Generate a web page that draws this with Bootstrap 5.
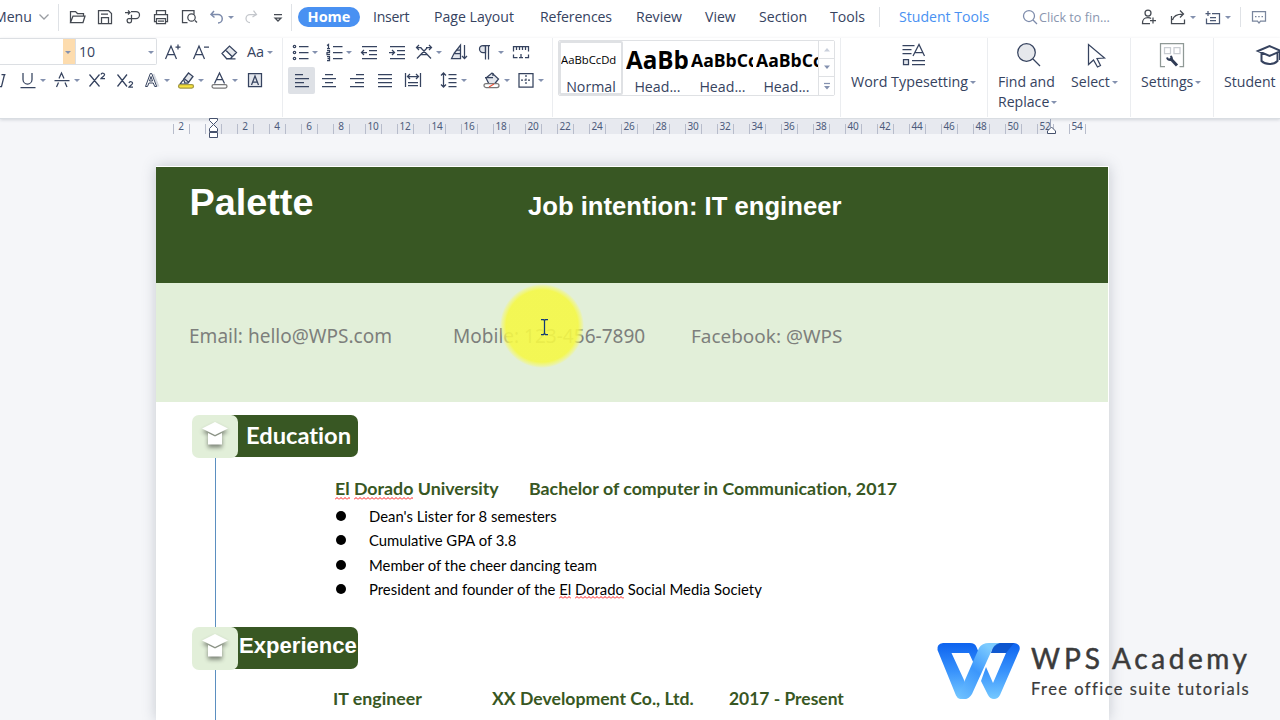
<!DOCTYPE html>
<html lang="en">
<head>
<meta charset="utf-8">
<meta name="viewport" content="width=device-width, initial-scale=1">
<title>Writer</title>
<link href="https://cdn.jsdelivr.net/npm/bootstrap@5.3.0/dist/css/bootstrap.min.css" rel="stylesheet">
<style>
  :root { --ink:#36435f; --dark:#385723; --pale:#e2efd9; --rule:#e6e8eb; }
  body { width:1280px; height:720px; background:#f5f6f9; color:var(--ink); font:14.1px/20px "Open Sans",sans-serif; }
  svg { display:block; overflow:visible; fill:none; stroke:var(--ink); stroke-width:1.25; flex:none; }
  .tabs-row, .tool-row { display:grid; align-items:center; white-space:nowrap; }
  .tabs-row { height:38px; padding-bottom:4px; grid-template-columns:34px 24px 10px 27px 28px 28px 28px 28px 19px 15px 27px 23px 7px 75px 61px 106px 96px 69px 54px 71px 49px 20px 121px 19px 100px 29px 20px 15px 20px 17px 9px 31px; }
  .tabs-row > svg { stroke:#454a52; }
  .tabs-row > svg.soft { stroke:#7d8bab; }
  .caret { display:block; width:10px; height:10px; flex:none; }
  .caret::before { content:""; display:block; margin:4px 0 0 2px; width:6px; border:3px solid transparent; border-top-color:#8491af; border-bottom:0; }
  .vline { width:1px; height:20px; background:#dfe2e6; }
  .home-tab { width:62px; height:20px; line-height:20px; font-weight:700; font-size:14.5px; background:#4991f2; }
  .ribbon { height:81px; border-bottom:1px solid #d9dde2; box-shadow:0 1px 3px rgba(90,100,120,.22); position:relative; }
  .group { height:79px; border-right:1px solid #ebedf0; flex:none; }
  .tool-row { height:29px; }
  .f1 { grid-template-columns:163px 28px 28px 28px 18px 15px; height:27px; }
  .f2 { grid-template-columns:18px 20px 14px 20px 15px 28px 27px 20px 15px 19px 14px 20px 15px 20px; }
  .p1 { grid-template-columns:19px 15px 19px 15px 28px 27px 20px 15px 27px 20px 15px 20px; height:27px; padding-left:8px; }
  .p2 { grid-template-columns:31px 28px 28px 28px 36px 20px 23px 20px 14px 20px 15px; padding-left:5px; }
  .f2, .p2 { margin-top:1px; height:28px; }
  .size-box { width:157px; height:27px; border:1px solid #dcdfe3; border-left:0; border-radius:0 2px 2px 0; }
  .hot { width:13px; margin-left:63px; background:#fddcae; border-right:1px solid #dcdfe3; }
  .active-tool { width:27px; height:27px; background:#dee1e6; border-radius:2px; display:flex; align-items:center; justify-content:center; }
  .gallery { width:277px; height:56px; margin:2px 0 0 5px; border:1px solid #dfe1e4; border-radius:2px; color:#000; }
  .swatch { width:65px; height:54px; overflow:hidden; white-space:nowrap; flex:none; }
  .swatch.on { border:2px solid #dfe1e4; width:64px; border-radius:2px; margin-right:2px; }
  .sample { height:38px; width:62px; margin-left:1px; overflow:hidden; line-height:38px; font-family:"Open Sans",sans-serif; font-weight:700; }
  .on .sample { font-weight:400; height:36px; line-height:34px; font-size:11.3px; color:#000; margin-left:0; }
  .swatch small { display:block; text-align:center; font-size:14.2px; line-height:15px; color:var(--ink); }
  .scroller { width:16px; border-left:1px solid #dfe1e4; }
  .scroller div { height:18px; border-bottom:1px solid #dfe1e4; display:flex; align-items:center; justify-content:center; }
  .scroller div:last-child { border:0; }
  .big-tool { padding-top:5px; white-space:nowrap; flex:none; }
  .big-tool svg { height:24px; width:24px; margin-bottom:5px; }
  .ruler { height:47px; padding-left:173px; }
  .ruler-cell { width:32px; height:15px; flex:none; font:10px/14px "Noto Sans",sans-serif; color:#4c5b7c; position:relative; background:linear-gradient(#b7bccb,#b7bccb) 0 5px/1px 10px no-repeat, linear-gradient(#b7bccb,#b7bccb) 16px 5px/1px 10px no-repeat; }
  .ruler-cell span { display:block; width:16px; text-align:center; letter-spacing:-.2px; }
  .ruler-band { left:213px; width:838px; top:0; height:15px; background:#e7e9ef; }
  .sheet { width:953px; margin-left:156px; padding:1px 1px 0 0; background:#fff; box-shadow:0 0 13px rgba(70,80,100,.27); flex:1 1 0; min-height:0; overflow:hidden; }
  .banner { height:116px; background:var(--dark); color:#fff; font-family:"Liberation Sans",sans-serif; font-weight:700; padding-left:33.500px; }
  .banner span:first-child { width:338.500px; font-size:37.8px; line-height:70px; }
  .banner span:last-child { font-size:25.65px; line-height:78px; }
  .contact { height:119px; background:var(--pale); color:#7d7f7c; font:19.05px/106px "Noto Sans",sans-serif; padding-left:33px; }
  .resume { font-family:Lato,sans-serif; font-variant-ligatures:none; color:#000; padding-left:36px; position:relative; }
  .timeline { left:59px; top:40px; width:1px; height:300px; background:#5b8fc0; }
  .heading { width:166px; height:43px; position:relative; }
  .heading-icon { width:46px; height:43px; background:var(--pale); border-radius:7px; z-index:1; }
  .heading-icon svg { filter:drop-shadow(0 3px 2px rgba(0,0,0,.45)); stroke:none; }
  .heading-bar { width:133px; height:42px; margin-left:-13px; padding-left:21px; background:var(--dark); border-radius:7px; color:#fff; font-weight:700; font-size:23.7px; line-height:40px; white-space:nowrap; }
  .heading-bar.alt { font:700 22.1px/37px "Liberation Sans",sans-serif; padding-left:14px; }
  .role { color:var(--dark); font-weight:700; font-size:17.8px; line-height:24px; white-space:nowrap; }
  .facts { font-size:14.85px; line-height:24.3px; margin:0; padding:0 0 0 142px; list-style:none; white-space:nowrap; }
  .facts li { display:flex; align-items:center; }
  .facts li::before { content:""; width:10px; height:10px; border-radius:50%; background:#000; margin:0 23px 0 2px; }
  .typo { padding-bottom:1px; background:url("data:image/svg+xml,%3Csvg xmlns='http://www.w3.org/2000/svg' width='4' height='3'%3E%3Cpath d='M0 2.5L2 .5L4 2.5' fill='none' stroke='red' stroke-width='.9'/%3E%3C/svg%3E") 0 100%/4px 3px repeat-x; }
  .spot { left:500px; top:284px; width:84px; height:84px; background:radial-gradient(circle closest-side,rgba(245,248,70,.9) 0 36px,rgba(245,248,90,.72) 38px,rgba(245,248,110,.5) 40px,transparent 42px); }
  .brand-mark { left:936px; top:641px; color:#3b3b3b; }
  .brand-mark b { display:block; font:400 28px/32px Lato,sans-serif; -webkit-text-stroke:.5px #3b3b3b; white-space:nowrap; }
  .brand-mark em { display:block; font:400 16.5px/20px Lato,sans-serif; letter-spacing:1.45px; font-variant-ligatures:none; white-space:nowrap; -webkit-text-stroke:.2px #3b3b3b; }
</style>
</head>
<body class="overflow-hidden position-relative d-flex flex-column m-0">
<header class="bg-white flex-shrink-0">
  <nav class="tabs-row">
    <span style="margin-left:-6px">Menu</span>
    <svg width="20" height="20"><path stroke="#9a9da2" d="M5.500 7.500l4.500 4.500 4.500-4.500"/></svg>
    <i class="vline" style="height:27px"></i>
    <svg width="20" height="20"><path d="M2.500 15.500v-11h5l2 2h6v2.500M2.500 15.500l2.500-6.500h12l-2 6.500z"/></svg>
    <svg width="20" height="20"><path d="M3.500 3.500h10l3 3v10h-13zM6.500 16.500v-6h7v6M6 7h7"/></svg>
    <svg width="20" height="20"><path d="M2 5.500h5M5 3.500l2 2-2 2M8 4.500h5a3.500 3.500 0 0 1 0 7h-7a2.200 2.200 0 1 0 2.500 2.200v-6"/></svg>
    <svg width="20" height="20"><path d="M5.500 7.500v-4h9v4M5.500 14.500h-2v-7h13v7h-2M5.500 11.500h9v5h-9zM7 14h6"/></svg>
    <svg width="20" height="20"><path d="M8.500 15.500h-5v-12h11.500v4M16 13.500l2 2"/><circle cx="12.500" cy="10.500" r="3.700"/></svg>
    <svg class="soft" width="20" height="20"><path stroke-width="1.500" d="M7 4l-3 3.500 3.500 3M4.500 7.500H11a4 4 0 0 1 0 8.500"/></svg>
    <i class="caret"></i>
    <svg width="20" height="20"><path stroke="#c4c7cc" d="M12.500 3.500l3 4-4 2.500M15 7.500H9a4 4 0 0 0 0 8"/></svg>
    <svg width="20" height="20"><path d="M6 7.500h8M7 11l3 3 3-3z"/></svg>
    <i class="vline" style="height:27px"></i>
    <span class="home-tab rounded-pill text-white text-center">Home</span>
    <span style="letter-spacing:-.3px">Insert</span><span>Page Layout</span><span style="letter-spacing:-.1px">References</span><span>Review</span><span>View</span><span>Section</span><span>Tools</span>
    <i class="vline"></i>
    <span style="color:#4991f2">Student Tools</span>
    <svg class="soft" width="20" height="20"><circle cx="9" cy="9" r="5.500"/><path d="M13 13l4 4"/></svg>
    <span style="font-size:12.65px;color:#8a96af">Click to fin...</span>
    <svg width="20" height="20"><circle cx="9" cy="6" r="3"/><path d="M11 16.500H3.500c0-4 1-6 5.500-6q2 0 3 1M11 13.500h6M14 10.500v6"/></svg>
    <svg width="20" height="20"><path d="M3.500 9v7.500h13v-4M4.500 13c1-4 4-6 10-6M12 3.500l3.500 3.500-3.500 3.500"/></svg>
    <i class="caret"></i>
    <svg width="20" height="20"><path stroke="#4d5a75" d="M2.500 6.500h5M5 4v5M9 6.500h7.500v10h-3M3.500 11.500v5h11M7 10.500h6M7 13.500h6"/></svg>
    <i class="caret"></i>
    <i class="vline"></i>
    <svg width="20" height="20"><path stroke="#7a869d" d="M3.500 4.500h13v9.500h-5l-1.500 2-1.500-2h-5zM6 9.500h1.500M9.200 9.500h1.500M12.500 9.500h1.500"/></svg>
  </nav>

  <div class="ribbon d-flex bg-white">
    <section class="group" style="width:283px">
      <div class="tool-row f1">
        <div class="size-box d-flex"><span class="hot d-flex align-items-center"><i class="caret"></i></span><span class="flex-grow-1" style="line-height:26px;padding-left:3px">10</span><i class="caret mt-2 me-0"></i></div>
        <svg width="20" height="20"><path d="M2.500 17L8 4l5.500 13M4.500 12.500h7M12.500 5h5M15 2.500v5"/></svg>
        <svg width="20" height="20"><path d="M2.500 17L8 4l5.500 13M4.500 12.500h7M13 5h5"/></svg>
        <svg width="20" height="20"><path fill="#e6e8ec" stroke="none" d="M6.500 8.500L11 4l6.500 6.500-4.500 5z"/><path d="M3 11.500l7.500-7.500 7 6.500-6 6H7.500zM6.500 8l6.500 6.500M7 16.800h9.500"/></svg>
        <span style="font-size:14.500px;letter-spacing:-.2px">Aa</span><i class="caret"></i>
      </div>
      <div class="tool-row f2">
        <svg width="18" height="20"><path d="M0 16.500h1.500L4.500 4.500M1.500 4.500h4"/></svg>
        <svg width="20" height="20"><path d="M5 3v6.500a4.500 4.500 0 0 0 9 0V3M2.500 17.500h15"/></svg><i class="caret"></i>
        <svg width="20" height="20"><path d="M4.500 17l2-4.500M7 8.500L9.500 3l2.500 5.500M13 12.500l2 4.500M2.500 10.500h15"/></svg><i class="caret"></i>
        <svg width="20" height="20"><path d="M2.500 4.500l10 12M12.500 4.500l-10 12M14 4.500c.5-2 4-1.500 3.500.5-.2 1-3 2.500-3.500 3.500h4"/></svg>
        <svg width="20" height="20"><path d="M2.500 4.500l9.500 12M12 4.500l-9.500 12M14 13c.5-2 4-1.500 3.500.5-.2 1-3 2.500-3.500 3.500h4"/></svg>
        <svg width="20" height="20"><path stroke="#d3d7df" stroke-width="2" d="M11.500 4l5 12.500"/><path stroke-width="1" d="M3.500 16.500L8.300 3.500h1.400l5 13h-2L11.300 13H6.900l-1.400 3.500zM7.500 11L9 6.500l1.500 4.500z"/></svg><i class="caret"></i>
        <svg width="20" height="20"><path fill="#e6e8ec" d="M6.500 9.500L11.500 3l4.500 3.500-5 6.500H8z"/><path d="M7 8.500l5 4M6 10l-3 4h5"/><rect x="1.500" y="14.500" width="15" height="3.500" rx="1.700" fill="#f8e33a" stroke="#a49a45"/></svg><i class="caret"></i>
        <svg width="20" height="20"><path d="M4.500 13.500L9.500 3l5 10.500M6.500 9.500h6.500"/><rect x="2" y="14.500" width="15" height="3.500" rx="1.700" fill="#fff" stroke="#777"/></svg><i class="caret"></i>
        <svg width="20" height="20"><path fill="#e3e6ec" d="M3.500 3.500h13v13h-13z"/><path d="M6.500 15L10 6l3.500 9M7.500 12h5"/></svg>
      </div>
    </section>

    <section class="group" style="width:270px">
      <div class="tool-row p1">
        <svg width="20" height="20"><circle cx="3.500" cy="4.500" r="1.200"/><circle cx="3.500" cy="10.500" r="1.200"/><circle cx="3.500" cy="16.500" r="1.200"/><path d="M8 4.500h9.500M8 10.500h9.500M8 16.500h9.500"/></svg><i class="caret"></i>
        <svg width="20" height="20"><path d="M8 4.500h9.500M8 10.500h9.500M8 16.500h9.500M2 3.500l1.500-1v4M2 6.500h3M2 8.500h2.500v2H2v2h3M2 14.500h2.500v4H2M2.500 16.500h2"/></svg><i class="caret"></i>
        <svg width="20" height="20"><path d="M3 4.500h15M10 8.500h8M10 12.500h8M3 16.500h15M2.500 10.500H8M5 8l-2.500 2.500L5 13"/></svg>
        <svg width="20" height="20"><path d="M3 4.500h15M10 8.500h8M10 12.500h8M3 16.500h15M2 10.500H7.500M5 8l2.500 2.500L5 13"/></svg>
        <svg width="20" height="20"><path d="M3 16.500L13 6M17 16.500L7 6M6.500 12.500h7M2.500 5.500h5M12 5.500h5.500M5 3L2.500 5.500 5 8M15 3l2.500 2.500L15 8"/></svg><i class="caret"></i>
        <svg width="20" height="20"><path fill="#e3e6ec" d="M5 11.500L11.500 3v13.500h-9L5 11.500h6"/><path d="M11.500 8h-4M15.500 3v13.500M13 14l2.500 2.500L18 14"/></svg>
        <svg width="20" height="20"><path fill="#e3e6ec" d="M9.500 3.500H7a3.500 3.500 0 0 0 0 7h2.500z"/><path d="M7 3.500h7M9.500 3.500v14M12.500 3.500v14"/></svg><i class="caret"></i>
        <svg width="20" height="20"><path d="M2.500 9.500v-5h15v5M5.500 5v3M8.500 5v3M11.500 5v3M14.500 5v3M2.500 12.500v3h4M14 15.500h3.500v-3M10 12v3.500M8 15.500h4"/></svg>
      </div>
      <div class="tool-row p2">
        <span class="active-tool"><svg width="20" height="20"><path d="M3 4.500h8M3 8.500h14M3 12.500h9M3 16.500h14"/></svg></span>
        <svg width="20" height="20"><path d="M6 4.500h8M3 8.500h14M6 12.500h8M3 16.500h14"/></svg>
        <svg width="20" height="20"><path d="M9 4.500h8M3 8.500h14M8 12.500h9M3 16.500h14"/></svg>
        <svg width="20" height="20"><path d="M3 4.500h14M3 8.500h14M3 12.500h14M3 16.500h14"/></svg>
        <svg width="20" height="20"><path d="M2.500 3v14M17.500 3v14M5 6.500h10M7 4L4.500 6.500 7 9M13 4l2.500 2.500L13 9M5 12.500h10M5 15.500h10"/></svg>
        <svg width="20" height="20"><path d="M4.500 3v14M2 5.500L4.500 3 7 5.500M2 14.500L4.500 17 7 14.500M9.500 4.500h8M9.500 8.500h8M9.500 12.500h8M9.500 16.500h8"/></svg><i class="caret"></i>
        <svg width="20" height="20"><path fill="#e3e6ec" d="M4 8l6-5 6.500 6-4 5H7z"/><path d="M3 7.500h8M11 3v3"/><rect x="2" y="13.500" width="15" height="4" rx="2" fill="#fff" stroke="#777"/><path stroke="#e8553e" d="M7 17l5-3"/></svg><i class="caret"></i>
        <svg width="20" height="20"><path d="M3 3.500h14v13.500h-14z"/><path d="M10 5v10.500M5 10.200h10" stroke-dasharray="2 1.500"/></svg><i class="caret"></i>
      </div>
    </section>

    <section class="group" style="width:288px">
      <div class="gallery d-flex">
        <div class="swatch on"><div class="sample">AaBbCcDd</div><small>Normal</small></div>
        <div class="swatch"><div class="sample" style="font-size:24.200px">AaBb</div><small>Head...</small></div>
        <div class="swatch"><div class="sample" style="font-size:17.600px">AaBbCc</div><small>Head...</small></div>
        <div class="swatch" style="width:63px"><div class="sample" style="font-size:17.600px">AaBbCc</div><small>Head...</small></div>
        <div class="scroller ms-auto bg-white">
          <div><svg width="8" height="5"><path fill="#c9cfdb" stroke="none" d="M1 4.500L4 1l3 3.500z"/></svg></div>
          <div><svg width="8" height="5"><path fill="#8491af" stroke="none" d="M1 .500h6L4 4z"/></svg></div>
          <div><svg width="8" height="7"><path fill="#8491af" stroke="none" d="M1 3h6L4 6.500z"/><path stroke="#8491af" d="M1 .500h6"/></svg></div>
        </div>
      </div>
    </section>

    <section class="group" style="width:147px">
      <div class="big-tool" style="padding-left:10px">
        <svg style="margin-left:51px"><path d="M.500 2.500h12M.500 6.500h9M.500 10.500h9M11 13L17 1.500 22.500 13M13 9.500h8M10 17.500h13M10 21.500h13"/><path fill="#e3e6ec" d="M1.500 16.500h5v5h-5z"/></svg>
        <div class="d-flex align-items-center" style="font-size:14.300px">Word Typesetting<i class="caret"></i></div>
      </div>
    </section>
    <section class="group d-flex" style="width:143px">
      <div class="big-tool" style="width:73px;padding-left:10px">
        <svg style="margin-left:19px"><circle cx="9.500" cy="9.500" r="8.800" fill="#e6e8ec"/><path d="M16 16l7 7"/></svg>
        <div>Find and</div><div class="d-flex align-items-center">Replace<i class="caret"></i></div>
      </div>
      <div class="big-tool" style="padding-left:10px">
        <svg style="margin-left:16px"><path fill="#fff" d="M1.500 1.500v20l5-4.500 4 7 3-1.500-3.500-7 7.500-.500z"/></svg>
        <div class="d-flex align-items-center">Select<i class="caret"></i></div>
      </div>
    </section>
    <section class="group" style="width:83px">
      <div class="big-tool" style="padding-left:10px">
        <svg style="margin-left:19px"><path stroke="#8f9996" d="M5 23.500H.500V.500h23v23h-4"/><path stroke="#c9cdd2" d="M4.500 4.500h6v6h-6zM14 4.500h6v6h-6z"/><path stroke="#2f3b55" stroke-width="3" d="M10 15l7 7.500"/><path stroke="#2f3b55" stroke-width="2" d="M7 14.500q1 3 4 2.500 2-2-.5-4"/></svg>
        <div class="d-flex align-items-center">Settings<i class="caret"></i></div>
      </div>
    </section>
    <section class="big-tool" style="padding-left:10px">
      <svg style="margin-left:33px"><path stroke-width="2" d="M1 8l11.500-5L24 8l-11.500 5zM4.500 10v8c4 4 12 4 16 0v-8M23 8v9"/></svg>
      <div>Student</div>
    </section>
  </div>
</header>

<div class="ruler position-relative d-flex flex-shrink-0" id="ruler">
  <div class="ruler-band position-absolute"></div>
  <svg class="position-absolute" style="left:208px;top:-2px;z-index:2;stroke:#46526e;stroke-width:1" width="12" height="24"><path fill="#fff" d="M1.500 1.500h8v2l-4 4 4 4v3h-8v-3l4-4-4-4zM1.500 15.500h8v5h-8z"/></svg>
  <svg class="position-absolute" style="left:1046px;top:7px;z-index:2;stroke:#46526e;stroke-width:1" width="12" height="10"><path stroke="#9aa3b8" d="M4.500-7v8"/><path fill="#fff" d="M1.500 7.500V5l4-4 4 4v2.500z"/></svg>
</div>

<main class="sheet">
  <div class="banner d-flex"><span>Palette</span><span>Job intention: IT engineer</span></div>
  <div class="contact d-flex"><span style="width:264px">Email: hello@WPS.com</span><span style="width:238px">Mobile: 123-456-7890</span><span style="font-size:18.950px">Facebook: @WPS</span></div>
  <article class="resume">
    <div class="timeline position-absolute"></div>
    <div class="heading d-flex" style="margin-top:13px">
      <div class="heading-icon position-relative d-flex justify-content-center"><svg width="28" height="30" class="mt-1"><path fill="#fff" d="M1 9.500L14 3l13 6.500L14 16zM7 14l7 3.500 7-3.500v11.500H7z"/></svg></div>
      <div class="heading-bar">Education</div>
    </div>
    <div class="role d-flex" style="margin:18px 0 4px 143px"><span style="width:194px"><span class="typo">El</span> <span class="typo">Dorado</span> University</span><span>Bachelor of computer in Communication, 2017</span></div>
    <ul class="facts">
      <li>Dean's Lister for 8 semesters</li>
      <li>Cumulative GPA of 3.8</li>
      <li>Member of the cheer dancing team</li>
      <li><span>President and founder of the <span class="typo">El</span> <span class="typo">Dorado</span> Social Media Society</span></li>
    </ul>
    <div class="heading d-flex" style="margin-top:26px">
      <div class="heading-icon position-relative d-flex justify-content-center"><svg width="28" height="30" class="mt-1"><path fill="#fff" d="M1 9.500L14 3l13 6.500L14 16zM7 14l7 3.500 7-3.500v11.500H7z"/></svg></div>
      <div class="heading-bar alt">Experience</div>
    </div>
    <div class="role d-flex align-items-baseline" style="margin:16px 0 0 141px"><span style="width:159px">IT engineer</span><span style="width:237px;font-size:17.650px">XX Development Co., Ltd.</span><span style="font-size:17.450px">2017 - Present</span></div>
  </article>
</main>

<div class="spot position-absolute"></div>
<svg class="position-absolute" style="left:540px;top:318px;stroke:#123a76" width="9" height="18"><path d="M1 1.500h2.500l1 1 1-1H8M4.500 2v14M1 16.500h2.500l1-1 1 1H8"/></svg>

<aside class="brand-mark position-absolute d-flex">
  <svg width="86" height="60" style="stroke:none">
    <defs>
      <linearGradient id="blueA" x1="0" y1="0" x2="0" y2="1"><stop offset="0" stop-color="#0d63ef"/><stop offset=".5" stop-color="#3892fc"/><stop offset="1" stop-color="#75c9ff"/></linearGradient>
      <linearGradient id="blueB" x1="0" y1="1" x2=".6" y2="0"><stop offset="0" stop-color="#6fc1ff"/><stop offset=".55" stop-color="#3c97fc"/><stop offset="1" stop-color="#7ccbff"/></linearGradient>
    </defs>
    <path fill="url(#blueA)" d="M7 2h27q5 0 6.500 4L43 12l-5 11-5-11H15.500L28 39l5 13-3 6h-6q-3-1-4-3.500L1.500 9Q.500 3 7 2z"/>
    <path fill="url(#blueA)" d="M59 2h19q7 1 5.500 7L64 54q-2 4-6 4t-6-4l-7-14 5-14 7 16L70 12H55z"/>
    <path fill="url(#blueB)" d="M53 2h11q-7 3-9 9L36 53q-3 5-7 5t-6-3l6-16L43 7q3-5 10-5z"/>
    <path fill="#0b4fc0" opacity=".7" d="M64 2h14l-8 10H55q2-9 9-10z"/>
  </svg>
  <div style="padding:1px 0 0 9px"><b><span class="d-inline-block" style="letter-spacing:4px;width:81px">WPS</span><span style="letter-spacing:3.600px">Academy</span></b><em style="margin-top:5px">Free office suite tutorials</em></div>
</aside>

<script src="https://cdn.jsdelivr.net/npm/bootstrap@5.3.0/dist/js/bootstrap.bundle.min.js"></script>
<script>
  // One cell covers two ruler units; the zero mark has no number.
  const ruler = document.getElementById('ruler');
  const marks = [2, ''].concat(Array.from({ length: 27 }, (_, i) => (i + 1) * 2));
  marks.forEach(function (n) {
    const cell = document.createElement('div');
    cell.className = 'ruler-cell';
    cell.innerHTML = '<span>' + n + '</span>';
    ruler.appendChild(cell);
  });
</script>
</body>
</html>
